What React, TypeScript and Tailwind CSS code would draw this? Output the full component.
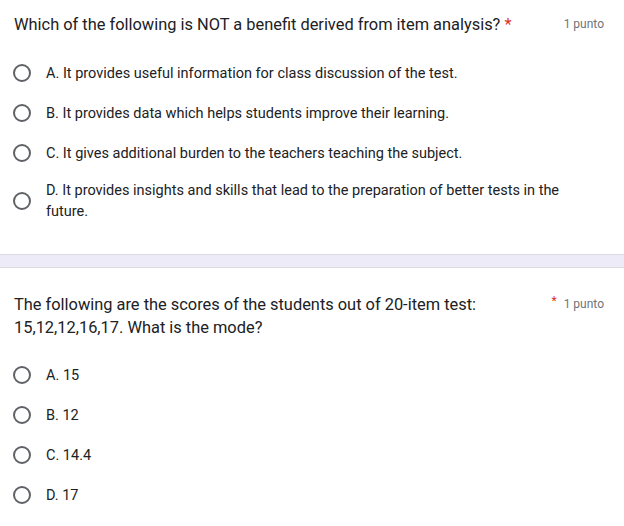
import React from "react";

const Radio = () => (
  <span className="block w-[18px] h-[18px] rounded-full border-2 border-[#5f6368] shrink-0" />
);

const Option = ({ text }: { text: string }) => (
  <div className="flex items-center gap-[15px] pl-[13px] pr-[57px] min-h-[40px] py-[7px]">
    <Radio />
    <span className="text-[14.5px] leading-[21px] text-[#202124]" style={{ fontFamily: "Roboto, sans-serif" }}>
      {text}
    </span>
  </div>
);

export default function App() {
  return (
    <div className="w-[624px] h-[526px] bg-white overflow-hidden" style={{ fontFamily: "Roboto, sans-serif" }}>
      <div className="pt-[13px]">
        <div className="flex items-start pl-[14px] pr-[20px]">
          <div className="flex-1 text-[16.4px] leading-[23px] text-[#202124]">
            Which of the following is NOT a benefit derived from item analysis? <span className="text-[#d93025]">*</span>
          </div>
          <div className="text-[12px] leading-[23px] text-[#70757a] pl-4">1 punto</div>
        </div>
        <div className="mt-[17px] flex flex-col">
          <Option text="A. It provides useful information for class discussion of the test." />
          <Option text="B. It provides data which helps students improve their learning." />
          <Option text="C. It gives additional burden to the teachers teaching the subject." />
          <Option text="D. It provides insights and skills that lead to the preparation of better tests in the future." />
        </div>
      </div>
      <div className="mt-[25px] h-[14px] bg-[#eeebf8] border-y border-[#dadce0]" />
      <div className="pt-[25px]">
        <div className="flex items-start pl-[14px] pr-[20px]">
          <div className="flex-1 text-[16.4px] leading-[23px] text-[#202124] pr-[60px]">
            The following are the scores of the students out of 20-item test: 15,12,12,16,17. What is the mode?
          </div>
          <div className="text-[12px] leading-[23px] text-[#70757a] flex gap-[7px]">
            <span className="text-[#d93025] relative top-[-3px]">*</span>1 punto
          </div>
        </div>
        <div className="mt-[16px] flex flex-col">
          <Option text="A. 15" />
          <Option text="B. 12" />
          <Option text="C. 14.4" />
          <Option text="D. 17" />
        </div>
      </div>
    </div>
  );
}
